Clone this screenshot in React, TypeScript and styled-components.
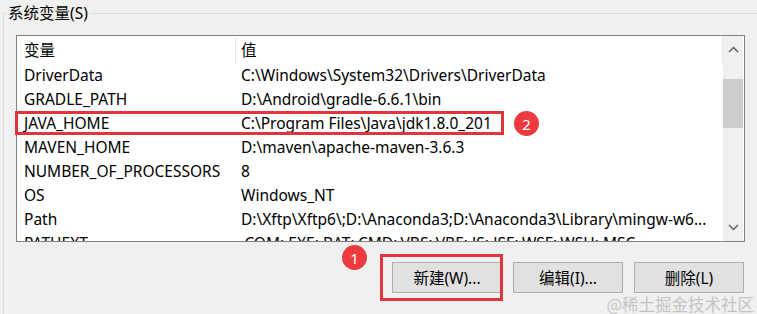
import styled, { createGlobalStyle } from 'styled-components'

const GlobalStyle = createGlobalStyle`
	html, body {
		margin: 0;
		padding: 0;
		background: #f0f0f0;
		overflow: hidden;
	}
	body {
		font-family: "Noto Sans", "Noto Sans CJK SC", sans-serif;
		font-size: 15.5px;
		color: #000;
	}
`

const rows = [
	{ name: 'DriverData', value: 'C:\\Windows\\System32\\Drivers\\DriverData' },
	{ name: 'GRADLE_PATH', value: 'D:\\Android\\gradle-6.6.1\\bin' },
	{ name: 'JAVA_HOME', value: 'C:\\Program Files\\Java\\jdk1.8.0_201', marked: true },
	{ name: 'MAVEN_HOME', value: 'D:\\maven\\apache-maven-3.6.3' },
	{ name: 'NUMBER_OF_PROCESSORS', value: '8' },
	{ name: 'OS', value: 'Windows_NT' },
	{ name: 'Path', value: 'D:\\Xftp\\Xftp6\\;D:\\Anaconda3;D:\\Anaconda3\\Library\\mingw-w6...' },
	{ name: 'PATHEXT', value: '.COM;.EXE;.BAT;.CMD;.VBS;.VBE;.JS;.JSE;.WSF;.WSH;.MSC' },
]

const Chevron = ({ up }: { up?: boolean }) => (
	<svg width='11' height='7' viewBox='0 0 11 7'>
		<path
			d={up ? 'M1 6 L5.5 1.5 L10 6' : 'M1 1 L5.5 5.5 L10 1'}
			fill='none'
			stroke='#606060'
			strokeWidth='1.5'
		/>
	</svg>
)

const App = () => {
	return (
		<Page>
			<GlobalStyle />
			<Group>
				<Legend>系统变量(S)</Legend>
				<ListBox>
					<Table>
						<Header>
							<HeadCell $first>变量</HeadCell>
							<HeadCell>值</HeadCell>
						</Header>
						{rows.map((r) => (
							<Row key={r.name} $marked={r.marked}>
								<NameCell>{r.name}</NameCell>
								<ValueCell>{r.value}</ValueCell>
								{r.marked && <Badge $left={497} $top={0}>2</Badge>}
							</Row>
						))}
					</Table>
					<ScrollBar>
						<ArrowBtn>
							<Chevron up />
						</ArrowBtn>
						<Track>
							<Thumb />
						</Track>
						<ArrowBtn $down>
							<Chevron />
						</ArrowBtn>
					</ScrollBar>
				</ListBox>
				<Buttons>
					<Button $marked>
						新建(W)...
						<Badge $left={-51} $top={-18}>1</Badge>
					</Button>
					<Button>编辑(I)...</Button>
					<Button>删除(L)</Button>
				</Buttons>
			</Group>
			<Watermark>@稀土掘金技术社区</Watermark>
		</Page>
	)
}

const Page = styled.div`
	position: relative;
	width: 757px;
	height: 314px;
	overflow: hidden;
`

const Group = styled.fieldset`
	margin: 3px -80px 0 3px;
	padding: 12px 0 40px 12px;
	border: 1px solid #dcdcdc;
	min-width: 0;
`

const Legend = styled.legend`
	margin-left: -10px;
	padding: 0 2px;
	line-height: 20px;
	font-size: 15.5px;
`

const ListBox = styled.div`
	display: flex;
	width: 729px;
	height: 207px;
	box-sizing: border-box;
	border: 1px solid #828282;
	background: #fff;
`

const Table = styled.div`
	flex: 1;
	display: flex;
	flex-direction: column;
	clip-path: inset(0 0 0 -4px);
`

const Header = styled.div`
	display: flex;
	flex: 0 0 27px;
	align-items: center;
`

const HeadCell = styled.div<{ $first?: boolean }>`
	box-sizing: border-box;
	height: 26px;
	display: flex;
	align-items: center;
	border-right: 1px solid #e5e5e5;
	${(p) => (p.$first ? 'width: 219px; padding-left: 7px;' : 'flex: 1; padding-left: 5px;')}
`

const Row = styled.div<{ $marked?: boolean }>`
	position: relative;
	display: flex;
	align-items: center;
	flex: 0 0 24px;
	white-space: nowrap;
	${(p) =>
		p.$marked &&
		`
		&::after {
			content: '';
			position: absolute;
			left: -2px;
			top: 0;
			width: 489px;
			height: 24px;
			box-sizing: border-box;
			border: 3px solid #e2353b;
		}
	`}
`

const NameCell = styled.div`
	box-sizing: border-box;
	width: 219px;
	padding-left: 7px;
`

const ValueCell = styled.div`
	padding-left: 5px;
`

const Badge = styled.span<{ $left: number; $top: number }>`
	position: absolute;
	left: ${(p) => p.$left}px;
	top: ${(p) => p.$top}px;
	width: 25px;
	height: 25px;
	border-radius: 50%;
	background: #ec3a3e;
	color: #fff;
	font-size: 15px;
	display: flex;
	align-items: center;
	justify-content: center;
	z-index: 2;
`

const ScrollBar = styled.div`
	width: 20px;
	margin-right: 1px;
	background: #f0f0f0;
	display: flex;
	flex-direction: column;
`

const ArrowBtn = styled.div<{ $down?: boolean }>`
	height: 22px;
	display: flex;
	align-items: center;
	justify-content: center;
	padding-top: ${(p) => (p.$down ? '0' : '2px')};
	padding-bottom: ${(p) => (p.$down ? '3px' : '0')};
`

const Track = styled.div`
	flex: 1;
`

const Thumb = styled.div`
	margin-top: 19px;
	height: 49px;
	background: #cdcdcd;
`

const Buttons = styled.div`
	display: flex;
	justify-content: flex-end;
	gap: 11px;
	width: 729px;
	padding-right: 1px;
	box-sizing: border-box;
	margin-top: 20px;
`

const Button = styled.div<{ $marked?: boolean }>`
	position: relative;
	width: 110px;
	height: 31px;
	box-sizing: border-box;
	border: 1px solid #adadad;
	background: #e1e1e1;
	display: flex;
	align-items: center;
	justify-content: center;
	${(p) =>
		p.$marked &&
		`
		&::after {
			content: '';
			position: absolute;
			top: -9px;
			left: -13px;
			right: -2px;
			bottom: -9px;
			border: 3px solid #e2353b;
		}
	`}
`

const Watermark = styled.div`
	position: absolute;
	right: 3px;
	bottom: 0;
	line-height: 20px;
	white-space: nowrap;
	font-family: "Noto Sans CJK SC", sans-serif;
	font-size: 16.5px;
	color: rgba(175, 175, 175, 0.7);
`

export default App
